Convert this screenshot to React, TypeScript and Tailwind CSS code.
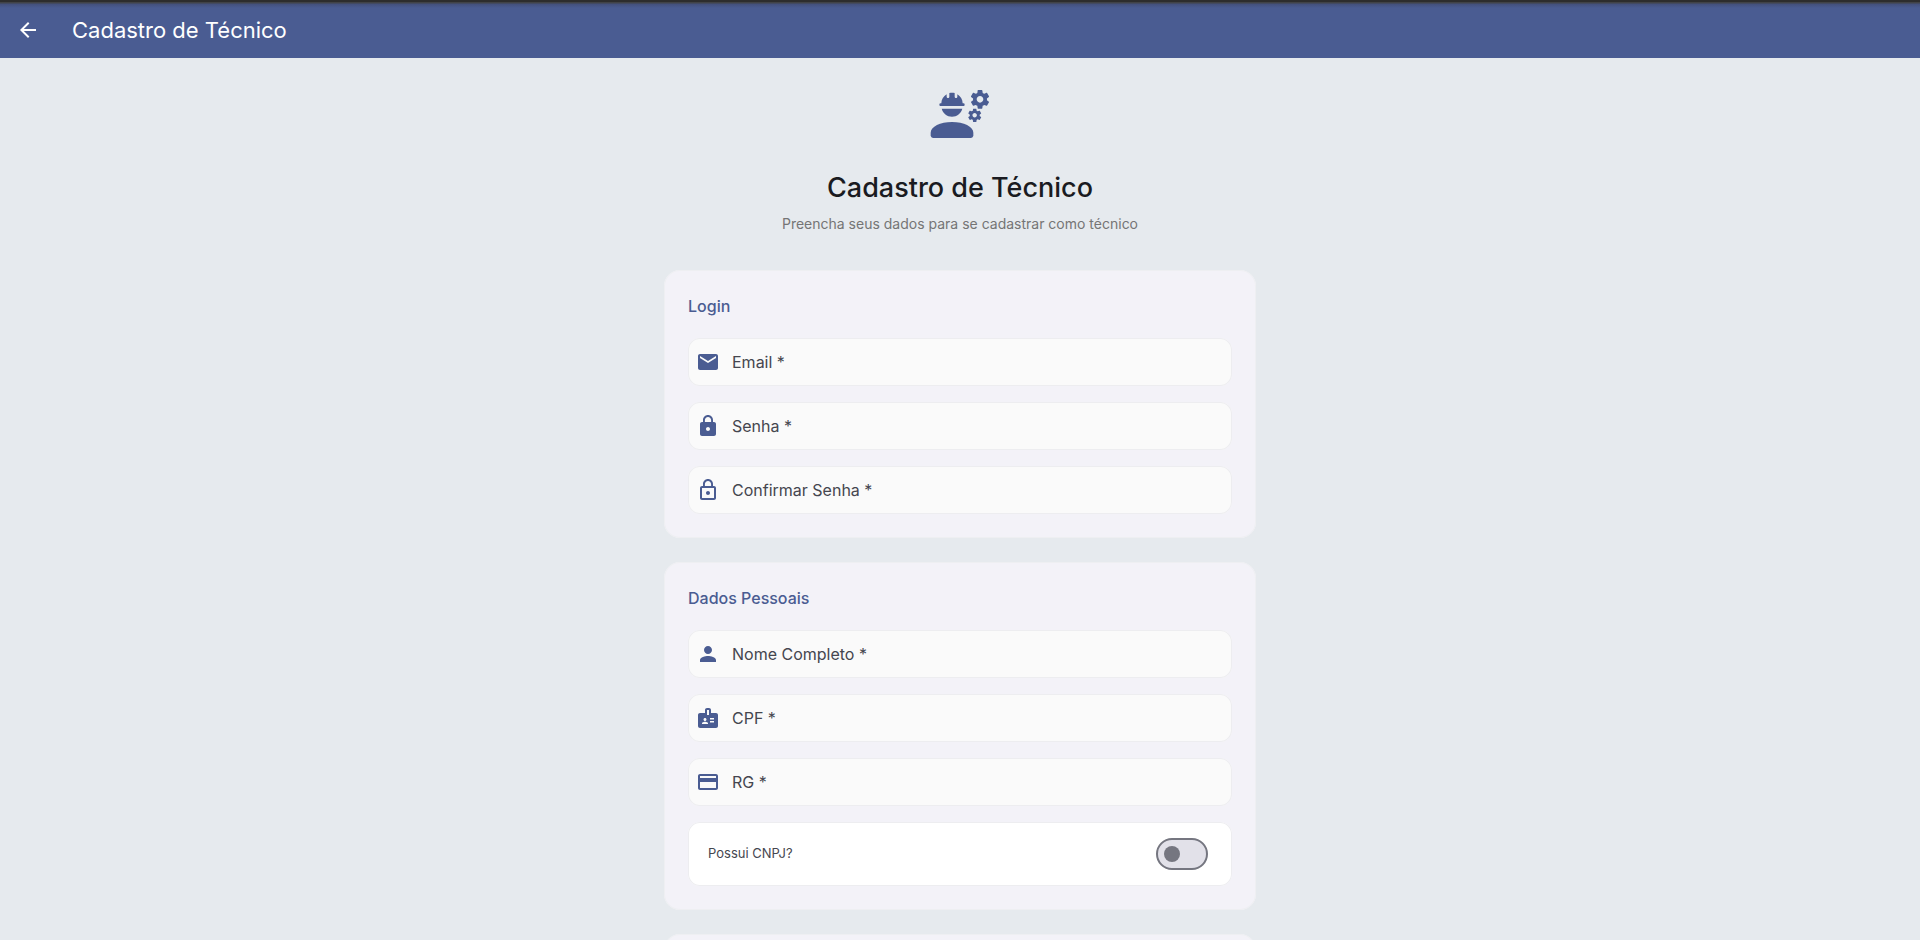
import { useState } from "react";
import type { ReactNode } from "react";
import type { IconType } from "react-icons";
import {
  MdArrowBack,
  MdBadge,
  MdCreditCard,
  MdEmail,
  MdLock,
  MdLockOutline,
  MdPerson,
} from "react-icons/md";

// Engineering icon with rounded shoulders
function EngineeringIcon({ className }: { className?: string }) {
  return (
    <svg viewBox="0 0 24 24" fill="currentColor" className={className}>
      <path d="M9 15c-4.42 0-8 1.79-8 4v1c0 .55.45 1 1 1h14c.55 0 1-.45 1-1v-1c0-2.21-3.58-4-8-4z" />
      <path d="M4.74 9h8.53c.27 0 .49-.22.49-.49v-.02a.49.49 0 0 0-.49-.49H13c0-1.48-.81-2.75-2-3.45v.95c0 .28-.22.5-.5.5s-.5-.22-.5-.5V4.14C9.68 4.06 9.35 4 9 4s-.68.06-1 .14V5.5c0 .28-.22.5-.5.5S7 5.78 7 5.5v-.95C5.81 5.25 5 6.52 5 8h-.26a.49.49 0 0 0-.49.49v.03c0 .26.22.48.49.48zM9 13c1.86 0 3.41-1.28 3.86-3H5.14c.45 1.72 2 3 3.86 3z" />
      <path d="M22.1 6.84c.01-.11.02-.22.02-.34 0-.12-.01-.23-.03-.34l.74-.58c.07-.05.08-.15.04-.22l-.7-1.21c-.04-.08-.14-.1-.21-.08l-.86.35c-.18-.14-.38-.25-.59-.34l-.13-.93A.17.17 0 0 0 20.2 3h-1.4c-.09 0-.16.06-.17.15l-.13.93c-.21.09-.41.21-.59.34l-.87-.35c-.08-.03-.17 0-.21.08l-.7 1.21c-.04.08-.03.17.04.22l.74.58c-.02.11-.03.23-.03.34 0 .11.01.23.03.34l-.74.58c-.07.05-.08.15-.04.22l.7 1.21c.04.08.14.1.21.08l.87-.35c.18.14.38.25.59.34l.13.93c.01.09.08.15.17.15h1.4c.09 0 .16-.06.17-.15l.13-.93c.21-.09.41-.21.59-.34l.87.35c.08.03.17 0 .21-.08l.7-1.21c.04-.08.03-.17-.04-.22l-.73-.58zm-2.6.91c-.69 0-1.25-.56-1.25-1.25s.56-1.25 1.25-1.25 1.25.56 1.25 1.25-.56 1.25-1.25 1.25z" />
      <path d="M19.92 11.68l-.5-.87c-.03-.06-.1-.08-.15-.06l-.62.25c-.13-.1-.27-.18-.42-.24l-.09-.66a.12.12 0 0 0-.12-.1h-1c-.06 0-.11.04-.12.1l-.09.66c-.15.06-.29.15-.42.24l-.62-.25c-.06-.02-.12 0-.15.06l-.5.87c-.03.06-.02.12.03.16l.53.41c-.01.08-.02.16-.02.24 0 .08.01.17.02.24l-.53.41c-.05.04-.06.11-.03.16l.5.87c.03.06.1.08.15.06l.62-.25c.13.1.27.18.42.24l.09.66c.01.06.06.1.12.1h1c.06 0 .12-.04.12-.1l.09-.66c.15-.06.29-.15.42-.24l.62.25c.06.02.12 0 .15-.06l.5-.87c.03-.06.02-.12-.03-.16l-.52-.41c.01-.08.02-.16.02-.24 0-.08-.01-.17-.02-.24l.53-.41c.05-.04.06-.11.04-.16zm-2.42 1.65c-.46 0-.83-.38-.83-.83 0-.46.38-.83.83-.83s.83.38.83.83-.37.83-.83.83z" />
    </svg>
  );
}

type FieldProps = {
  id: string;
  label: string;
  icon: IconType;
  type?: string;
};

function Field({ id, label, icon: Icon, type = "text" }: FieldProps) {
  return (
    <div className="flex h-12 items-center rounded-xl bg-[#fafafa] px-2 inset-ring inset-ring-[#ededf0]">
      <Icon className="size-6 shrink-0 text-[#4a5c92]" />
      <label htmlFor={id} className="ml-3 shrink-0 text-base text-[#45464f]">
        {label}
      </label>
      <input
        id={id}
        type={type}
        className="ml-2 h-full min-w-0 flex-1 bg-transparent text-base outline-none"
      />
    </div>
  );
}

function Card({ title, children }: { title?: string; children?: ReactNode }) {
  return (
    <section className="min-h-40 rounded-2xl bg-[#f3f2f8] p-6 inset-ring inset-ring-[#eeeff2]">
      {title && (
        <h2 className="mb-5 text-base font-medium text-[#4a5c92]">{title}</h2>
      )}
      <div className="flex flex-col gap-4">{children}</div>
    </section>
  );
}

export default function App() {
  const [hasCnpj, setHasCnpj] = useState(false);

  return (
    <div className="flex h-screen flex-col overflow-hidden bg-[#e6eaee] font-['Inter',sans-serif]">
      <header className="flex h-[58px] shrink-0 items-center border-t-2 border-[#2d2d2d] bg-[#4a5c92] bg-[linear-gradient(#414347_0px,#414347_1px,#43507b_2px,#4a5c92_6px)] px-4 text-white">
        <button type="button" aria-label="Voltar" className="mr-8">
          <MdArrowBack className="size-6" />
        </button>
        <span className="text-[22px]">Cadastro de Técnico</span>
      </header>

      <main className="mx-auto w-full max-w-[640px] flex-1 px-6 pt-6">
        <div className="mb-9 flex flex-col items-center text-center">
          <EngineeringIcon className="size-16 text-[#4a5c92]" />
          <h1 className="mt-6 text-[27px] leading-9 font-medium text-[#1a1b21]">
            Cadastro de Técnico
          </h1>
          <p className="mt-2 text-sm text-[#757575]">
            Preencha seus dados para se cadastrar como técnico
          </p>
        </div>

        <form className="flex flex-col gap-6">
          <Card title="Login">
            <Field id="email" label="Email *" icon={MdEmail} type="email" />
            <Field id="senha" label="Senha *" icon={MdLock} type="password" />
            <Field
              id="confirmar"
              label="Confirmar Senha *"
              icon={MdLockOutline}
              type="password"
            />
          </Card>

          <Card title="Dados Pessoais">
            <Field id="nome" label="Nome Completo *" icon={MdPerson} />
            <Field id="cpf" label="CPF *" icon={MdBadge} />
            <Field id="rg" label="RG *" icon={MdCreditCard} />
            <div className="flex h-16 items-center justify-between rounded-xl bg-white pr-6 pl-5 inset-ring inset-ring-[#ededf0]">
              <label htmlFor="cnpj" className="text-[13px] text-[#45464f]">
                Possui CNPJ?
              </label>
              <input
                id="cnpj"
                type="checkbox"
                role="switch"
                checked={hasCnpj}
                onChange={(e) => setHasCnpj(e.target.checked)}
                className="flex h-8 w-[52px] appearance-none items-center rounded-full border-2 border-[#757680] bg-[#e2e1e9] px-1.5 before:size-4 before:rounded-full before:bg-[#757680] checked:justify-end checked:bg-[#4a5c92] checked:before:bg-white"
              />
            </div>
          </Card>

          <Card />
        </form>
      </main>
    </div>
  );
}
